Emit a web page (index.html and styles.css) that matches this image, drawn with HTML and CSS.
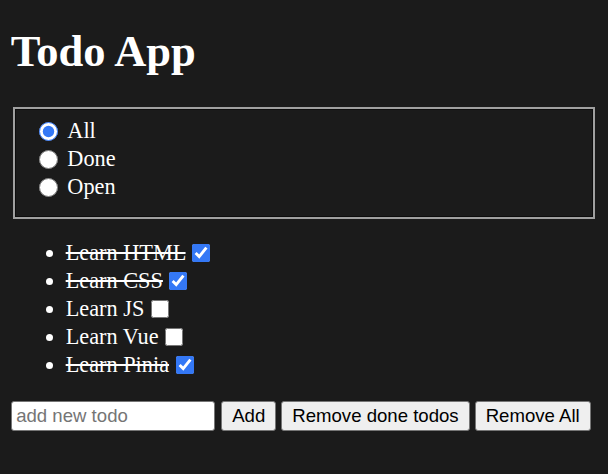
FILE: index.html
```html
<!DOCTYPE html>
<html>
<head>
<meta charset="utf-8">
<link rel="stylesheet" href="styles.css">
</head>
<body>
<h1 class="title">Todo App</h1>
<fieldset class="filter">
  <div class="opt"><input class="radio" type="radio" name="f" checked><label>All</label></div>
  <div class="opt"><input class="radio" type="radio" name="f"><label>Done</label></div>
  <div class="opt"><input class="radio" type="radio" name="f"><label>Open</label></div>
</fieldset>
<ul class="todos">
  <li class="todo"><span class="done">Learn HTML</span> <input class="check" type="checkbox" checked></li>
  <li class="todo"><span class="done">Learn CSS</span> <input class="check" type="checkbox" checked></li>
  <li class="todo"><span>Learn JS</span> <input class="check" type="checkbox"></li>
  <li class="todo"><span>Learn Vue</span> <input class="check" type="checkbox"></li>
  <li class="todo"><span class="done">Learn Pinia</span> <input class="check" type="checkbox" checked></li>
</ul>
<div class="controls">
  <input class="new" type="text" placeholder="add new todo">
  <button class="btn">Add</button>
  <button class="btn">Remove done todos</button>
  <button class="btn">Remove All</button>
</div>
</body>
</html>
```
FILE: styles.css
```css
html {
  background: #1b1b1b;
}
body {
  margin: 10.67px;
  color: #ffffff;
  font-family: "Liberation Serif", "Times New Roman", serif;
  font-size: 22.3px;
}
.title {
  font-size: 44.5px;
  line-height: 50px;
  margin: 15.5px 0 30.5px;
  font-weight: bold;
}
.filter {
  margin: 0 2.67px;
  padding: 8.5px 16px 16px;
  border: 2px solid #a0a0a0;
  box-shadow: inset 0 0 0 1px #0d0d0d;
  min-width: 0;
}
.opt {
  display: flex;
  align-items: center;
  height: 28px;
}
.radio {
  width: 19px;
  height: 19px;
  margin: 0 9px 0 8px;
  accent-color: #3478f6;
}
.todos {
  margin: 19.5px 0 22.5px;
  padding-left: 55px;
}
.todo {
  line-height: 28px;
  height: 28px;
}
.done {
  text-decoration: line-through;
}
.check {
  width: 18px;
  height: 18px;
  margin: 0 3px 0 1px;
  vertical-align: -2px;
  accent-color: #3478f6;
}
.controls {
  display: flex;
  gap: 5px;
  align-items: center;
}
.new {
  box-sizing: border-box;
  width: 204px;
  height: 30px;
  margin: 0 1px 0 0.5px;
  padding: 0 4px;
  font-family: "Liberation Sans", Arial, sans-serif;
  font-size: 18.6px;
  color: #000;
  background: #fff;
  border: 1.5px solid #767676;
  border-radius: 3px;
}
.new::placeholder {
  color: #757575;
}
.btn {
  box-sizing: border-box;
  height: 30px;
  padding: 0 10px;
  font-family: "Liberation Sans", Arial, sans-serif;
  font-size: 18.6px;
  color: #000;
  background: #efefef;
  border: 1.5px solid #767676;
  border-radius: 3px;
}
```
